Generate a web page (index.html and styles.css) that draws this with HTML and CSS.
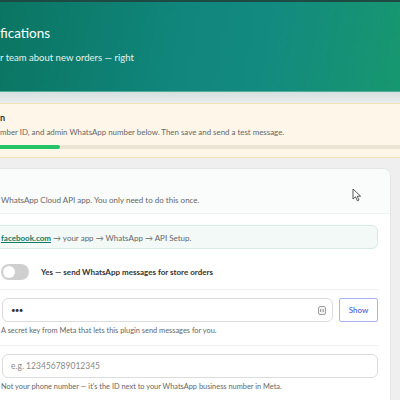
FILE: index.html
```html
<!DOCTYPE html>
<html lang="en">
<head>
<meta charset="utf-8">
<title>WhatsApp Notifications</title>
<link rel="stylesheet" href="styles.css">
</head>
<body>
<div class="page">
  <header class="hero">
    <h1 class="hero-title">fications</h1>
    <p class="hero-sub">r team about new orders — right</p>
  </header>
  <div class="band"></div>
  <section class="notice">
    <div class="notice-title">n</div>
    <div class="notice-text">mber ID, and admin WhatsApp number below. Then save and send a test message.</div>
    <div class="progress"><div class="progress-fill" style="width:60px"></div></div>
  </section>
  <section class="card">
    <div class="card-head">
      <p class="card-desc">WhatsApp Cloud API app. You only need to do this once.</p>
    </div>
    <div class="card-body">
      <div class="info"><a class="info-link" href="#">facebook.com</a> → your app → WhatsApp → API Setup.</div>
      <label class="toggle-row">
        <span class="toggle"><span class="knob"></span></span>
        <span class="toggle-label">Yes — send WhatsApp messages for store orders</span>
      </label>
      <div class="sep"></div>
      <div class="field-row">
        <div class="input with-icon">
          <span class="input-value">•••</span>
          <svg class="pm-icon" width="8" height="9" viewBox="0 0 8 9" aria-hidden="true">
            <rect x="0.5" y="0.5" width="7" height="8" rx="1.5" fill="#f4f4f4" stroke="#a0a0a0" stroke-width="1"/>
            <rect x="2" y="3" width="1.2" height="3" fill="#a0a0a0"/>
            <rect x="4.6" y="3" width="1.2" height="3" fill="#a0a0a0"/>
          </svg>
        </div>
        <button class="show-btn" type="button">Show</button>
      </div>
      <p class="help">A secret key from Meta that lets this plugin send messages for you.</p>
      <div class="sep"></div>
      <div class="input"><span class="placeholder">e.g. 123456789012345</span></div>
      <p class="help">Not your phone number — it's the ID next to your WhatsApp business number in Meta.</p>
    </div>
  </section>
  <svg class="cursor" width="10" height="14" viewBox="0 0 10 14" aria-hidden="true">
    <path d="M1 1 L1 11 L3.5 8.8 L5.4 12.8 L7 12 L5.2 8.2 L8.6 8.2 Z" fill="#ffffff" stroke="#444" stroke-width="0.9" stroke-linejoin="round"/>
  </svg>
</div>
</body>
</html>
```
FILE: styles.css
```css
html, body {
  margin: 0;
  padding: 0;
}
body {
  width: 400px;
  height: 400px;
  overflow: hidden;
  background: #efefef;
  font-family: "Lato", "Noto Sans", sans-serif;
  color: #333;
}
.page {
  position: relative;
  height: 400px;
  overflow: hidden;
}
.hero {
  box-sizing: border-box;
  height: 92px;
  border-top: 2px solid #1e4a44;
  border-bottom: 1px solid #52ad98;
  background: linear-gradient(100deg, #0b7562 0%, #10867c 45%, #138a80 65%, #17976f 100%);
  color: #ffffff;
  padding-top: 22px;
}
.hero-title {
  margin: 0;
  font-size: 13.5px;
  font-weight: 400;
  line-height: 18px;
}
.hero-sub {
  margin: 10px 0 0;
  font-size: 9.5px;
  line-height: 12px;
  color: #e3f3ef;
}
.band {
  height: 11px;
  background: linear-gradient(#d6dfdf, #ebeded);
}
.notice {
  box-sizing: border-box;
  height: 55px;
  background: #fef7e9;
  border-top: 1px solid #f3e3b6;
  border-bottom: 1px solid #f3e3b6;
  padding-top: 8px;
}
.notice-title {
  font-size: 9px;
  font-weight: 700;
  line-height: 12px;
  color: #333;
}
.notice-text {
  margin-top: 2px;
  font-size: 7.9px;
  line-height: 12px;
  color: #666;
}
.progress {
  margin-top: 7px;
  height: 4px;
  background: #ebe4d5;
}
.progress-fill {
  height: 4px;
  background: #25c466;
  border-radius: 0 2px 2px 0;
}
.card {
  margin: 10px 0 0 -20px;
  width: 411px;
  box-sizing: border-box;
  background: #ffffff;
  border: 1px solid #e3e6e5;
  border-bottom: none;
  border-radius: 8px 8px 0 0;
  height: 232px;
  overflow: hidden;
}
.card-head {
  box-sizing: border-box;
  height: 45px;
  background: #f9fcfb;
  border-bottom: 1px solid #eef2f1;
  padding: 25px 0 0 20px;
}
.card-desc {
  margin: 0;
  font-size: 8px;
  line-height: 12px;
  color: #666;
}
.card-body {
  padding: 11px 12px 0 21px;
}
.info {
  box-sizing: border-box;
  margin-left: -30px;
  height: 24px;
  padding: 6px 0 0 28px;
  background: #f2f9f6;
  border: 1px solid #d9ece4;
  border-radius: 6px;
  font-size: 8px;
  line-height: 12px;
  color: #666;
}
.info-link {
  color: #137a63;
  font-weight: 700;
  text-decoration: underline;
}
.toggle-row {
  display: flex;
  align-items: center;
  gap: 12px;
  margin-top: 15px;
  margin-left: -1px;
}
.toggle {
  position: relative;
  width: 28px;
  height: 16px;
  border-radius: 8px;
  background: #cfcfcf;
  flex: none;
}
.knob {
  position: absolute;
  left: 2px;
  top: 2px;
  width: 12px;
  height: 12px;
  border-radius: 50%;
  background: #ffffff;
}
.toggle-label {
  font-size: 8px;
  font-weight: 700;
  color: #333;
}
.sep {
  height: 1px;
  background: #efefef;
  margin: 8px 0 0 -22px;
}
.toggle-row + .sep {
  margin-top: 9px;
}
.field-row {
  display: flex;
  gap: 6px;
  margin-top: 8px;
}
.input {
  box-sizing: border-box;
  height: 24px;
  border: 1px solid #dcdcdc;
  border-radius: 6px;
  background: #ffffff;
  display: flex;
  align-items: center;
  padding: 0 6px 0 8px;
  font-size: 8.5px;
}
.sep + .input {
  margin-top: 8px;
}
.with-icon {
  flex: 1;
  justify-content: space-between;
}
.input-value {
  color: #333;
  font-size: 8px;
  letter-spacing: -0.8px;
}
.pm-icon {
  display: block;
}
.placeholder {
  color: #8a8a8a;
}
.show-btn {
  box-sizing: border-box;
  width: 39px;
  height: 24px;
  border: 1px solid #aab4f2;
  border-radius: 2px;
  background: #ffffff;
  color: #5366dc;
  font-family: inherit;
  font-size: 8px;
  font-weight: 600;
  padding: 0;
}
.help {
  margin: 3px 0 0 -1px;
  font-size: 7.4px;
  line-height: 12px;
  color: #666;
}
.cursor {
  position: absolute;
  left: 352px;
  top: 188px;
}
```
